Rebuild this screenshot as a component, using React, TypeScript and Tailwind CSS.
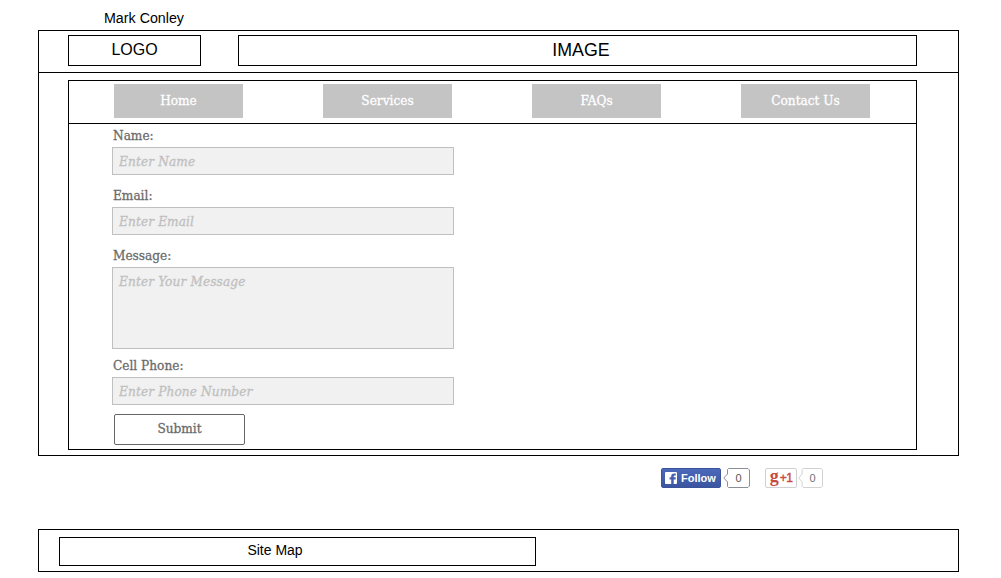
import React from "react";

const serif =
  "font-['DejaVu_Serif_Condensed','DejaVu_Serif',serif] [font-stretch:condensed] text-[13.5px] leading-5 [-webkit-text-stroke:0.3px_currentColor]";
const field =
  "block w-[342px] shrink-0 resize-none rounded-none border border-[#c0c0c0] bg-[#f1f1f1] px-[6px] font-['DejaVu_Serif_Condensed','DejaVu_Serif',serif] [font-stretch:condensed] text-[13.5px] leading-5 italic tracking-[0.12px] text-[#c0c0c0] outline-none placeholder:text-[#c0c0c0] placeholder:opacity-100 [-webkit-text-stroke:0.3px_#c0c0c0]";

const navItems = ["Home", "Services", "FAQs", "Contact Us"];

function Label({ children }: { children: React.ReactNode }) {
  return <label className={`${serif} ml-px block h-5 text-[#6b6b6b]`}>{children}</label>;
}

function Count({ border, color, label }: { border: string; color: string; label: string }) {
  return (
    <div className="relative h-5 w-full">
      <svg className="absolute inset-0 h-5 w-full" viewBox="0 0 27 20" preserveAspectRatio="none" fill="white" stroke={border}>
        <path d="M5.5 .5H25L26.5 2V18L25 19.5H5.5L4.5 18.5V14L.8 10L4.5 6V1.5Z" />
      </svg>
      <span className="relative block pl-[4px] text-center text-[11px] leading-5" style={{ color }}>
        {label}
      </span>
    </div>
  );
}

export default function App() {
  return (
    <div className="h-[578px] w-[1001px] overflow-hidden bg-white pl-[38px] font-['Liberation_Sans',sans-serif] text-black">
      <div className="h-[30px] pt-[8px] pl-[66px] text-[14.25px] leading-5">Mark Conley</div>

      <main className="h-[426px] w-[921px] border border-black">
        <header className="flex h-[42px] gap-[37px] border-b border-black pt-[4px] pl-[29px]">
          <div className="h-[31px] w-[133px] border border-black text-center text-[16px] leading-[27px]">LOGO</div>
          <div className="h-[31px] w-[679px] border border-black pl-[7px] text-center text-[17.8px] leading-[28px]">IMAGE</div>
        </header>

        <section className="mt-[7px] ml-[29px] h-[370px] w-[849px] border border-black">
          <nav className="flex h-[43px] gap-20 border-b border-black pt-[3px] pl-[45px]">
            {navItems.map((item) => (
              <a key={item} className={`${serif} h-[34px] w-[129px] bg-[#c4c4c4] pt-[6px] text-center text-white`}>
                {item}
              </a>
            ))}
          </nav>

          <form className="flex flex-col pl-[43px]">
            <div className="h-[60px] pt-[1px]">
              <Label>Name:</Label>
              <input className={`${field} mt-[2px] h-7`} placeholder="Enter Name" />
            </div>
            <div className="h-[60px] pt-[1px]">
              <Label>Email:</Label>
              <input className={`${field} mt-[2px] h-7`} placeholder="Enter Email" />
            </div>
            <div className="h-[110px] pt-[1px]">
              <Label>Message:</Label>
              <textarea className={`${field} mt-[2px] h-[82px] py-[3px]`} placeholder="Enter Your Message" />
            </div>
            <div className="h-[60px] pt-[1px]">
              <Label>Cell Phone:</Label>
              <input className={`${field} mt-[2px] h-7`} placeholder="Enter Phone Number" />
            </div>
            <button
              type="button"
              className={`${serif} ml-[2px] h-[31px] w-[131px] rounded-[2px] border border-[#666] bg-white pb-[3px] text-[#6b6b6b]`}
            >
              Submit
            </button>
          </form>
        </section>
      </main>

      <div className="flex h-[73px] pt-[12px] pl-[623px]">
        <div className="flex h-5 w-[60px] items-center rounded-[2px] border border-[#3b539b] bg-linear-to-b from-[#4c69ba] to-[#3b55a0] pl-[3px] text-[11px] font-bold text-white">
          <svg width="12" height="12" viewBox="0 0 12 12" className="mr-[4px] shrink-0">
            <rect width="12" height="12" rx="1" fill="white" />
            <path
              d="M6.2 12V7.4H4.6V5.3h1.6V4.2C6.2 2.3 7.3 1.4 9.1 1.4h1.7v2.1H9.7c-.8 0-1 .4-1 1v.8h2.1l-.3 2.1H8.7V12Z"
              fill="#435fae"
            />
          </svg>
          Follow
        </div>
        <div className="ml-[2px] w-[27px]">
          <Count border="#8c8f96" color="#555" label="0" />
        </div>
        <div className="ml-[15px] flex h-5 w-8 items-center justify-center rounded-[2px] border border-[#d0d0d0] bg-white text-[#c74b3e]">
          <span className="-mt-[4px] font-['Liberation_Serif',serif] text-[18px] leading-none font-bold">g</span>
          <span className="ml-px text-[12px] leading-none tracking-[-0.6px] [-webkit-text-stroke:0.4px_currentColor]">+1</span>
        </div>
        <div className="ml-px w-[25px]">
          <Count border="#d0d0d0" color="#737373" label="0" />
        </div>
      </div>

      <footer className="h-[43px] w-[921px] border border-black pt-[7px] pl-[20px]">
        <div className="h-[29px] w-[477px] border border-black pr-[45px] text-center text-[14px] leading-[25px]">
          Site Map
        </div>
      </footer>
    </div>
  );
}
